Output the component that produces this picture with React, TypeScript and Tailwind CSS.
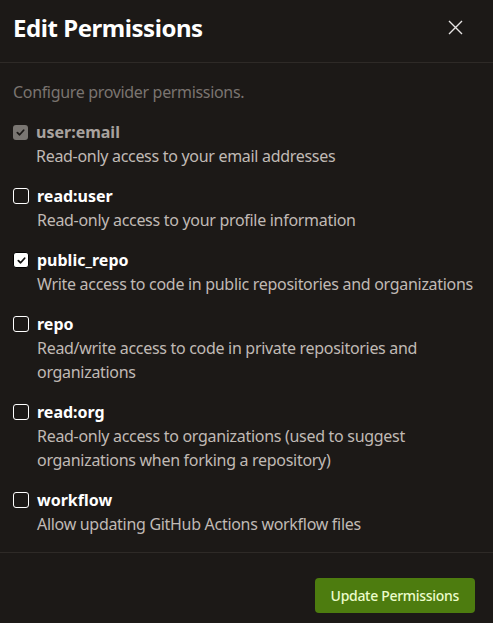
import React from "react";

interface Perm {
  name: string;
  desc: string;
  checked?: boolean;
  disabled?: boolean;
}

const perms: Perm[] = [
  { name: "user:email", desc: "Read-only access to your email addresses", checked: true, disabled: true },
  { name: "read:user", desc: "Read-only access to your profile information" },
  { name: "public_repo", desc: "Write access to code in public repositories and organizations", checked: true },
  { name: "repo", desc: "Read/write access to code in private repositories and organizations" },
  { name: "read:org", desc: "Read-only access to organizations (used to suggest organizations when forking a repository)" },
  { name: "workflow", desc: "Allow updating GitHub Actions workflow files" },
];

const Box: React.FC<{ checked?: boolean; disabled?: boolean }> = ({ checked, disabled }) => {
  if (disabled) {
    return (
      <div className="w-[15px] h-[15px] rounded-[3px] bg-[#7a7672] flex items-center justify-center shrink-0">
        <svg width="9" height="9" viewBox="0 0 10 10" fill="none" stroke="#1c1917" strokeWidth="2" strokeLinecap="round" strokeLinejoin="round">
          <path d="M1.5 5.2 4 7.5 8.5 2.5" />
        </svg>
      </div>
    );
  }
  if (checked) {
    return (
      <div className="w-[16px] h-[16px] rounded-[3px] bg-white border border-black flex items-center justify-center shrink-0">
        <svg width="9" height="9" viewBox="0 0 10 10" fill="none" stroke="#111" strokeWidth="2" strokeLinecap="round" strokeLinejoin="round">
          <path d="M1.5 5.2 4 7.5 8.5 2.5" />
        </svg>
      </div>
    );
  }
  return <div className="w-[16px] h-[16px] rounded-[3px] border-[1.5px] border-white shrink-0" />;
};

export default function App() {
  return (
    <div
      className="w-[493px] h-[623px] bg-[#1c1917] text-white flex flex-col"
      style={{ fontFamily: '"Noto Sans", "Open Sans", sans-serif' }}
    >
      <div className="h-[63px] flex items-center justify-between pl-[13px] pr-[30px] border-b border-[#2e2a27]">
        <h1 className="text-[24px] font-bold tracking-[-0.45px] -mt-[6px]">Edit Permissions</h1>
        <svg width="15" height="15" viewBox="0 0 15 15" stroke="#e7e5e4" strokeWidth="1.4" className="-mt-[7px]">
          <path d="M1 1 14 14M14 1 1 14" />
        </svg>
      </div>
      <div className="flex-1 px-[13px] pt-[17px] border-b border-[#2e2a27]">
        <p className="text-[16px] leading-6 text-[#7a7470] tracking-[-0.33px]">Configure provider permissions.</p>
        <div className="flex flex-col gap-4 mt-[16px]">
          {perms.map((p) => (
            <div key={p.name} className="flex gap-[8px]">
              <div className="h-6 flex items-center">
                <Box checked={p.checked} disabled={p.disabled} />
              </div>
              <div className="flex flex-col">
                <span className={`text-[16px] leading-6 font-bold ${p.disabled ? "text-[#a8a29e]" : "text-white"}`}>
                  {p.name}
                </span>
                <span className="text-[16px] leading-6 text-[#c0bab5] tracking-[-0.3px]">{p.desc}</span>
              </div>
            </div>
          ))}
        </div>
      </div>
      <div className="h-[70px] flex items-start justify-end pr-[18px] pt-[25px]">
        <button className="h-[35px] px-[16px] rounded-[4px] bg-[#4d7c0f] text-[14px] text-[#ecfccb] font-medium tracking-[-0.3px]">
          Update Permissions
        </button>
      </div>
    </div>
  );
}
